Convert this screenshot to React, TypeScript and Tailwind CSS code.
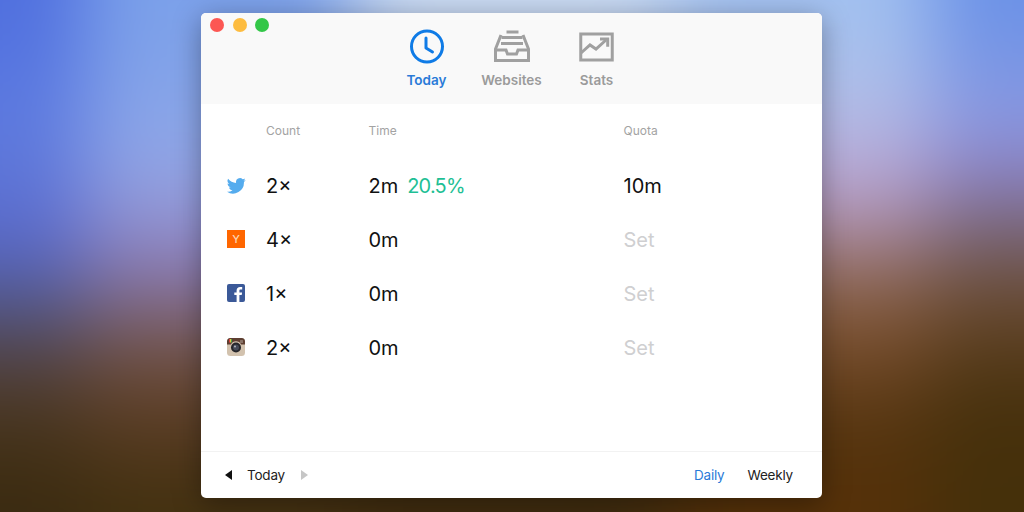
import React from "react";

const rows = [
  { icon: "twitter", count: "2×", time: "2m", pct: "20.5%", quota: "10m" },
  { icon: "yc", count: "4×", time: "0m", quota: "Set" },
  { icon: "facebook", count: "1×", time: "0m", quota: "Set" },
  { icon: "instagram", count: "2×", time: "0m", quota: "Set" },
];

const SiteIcon: React.FC<{ name: string }> = ({ name }) => {
  if (name === "twitter") {
    return (
      <svg width="19" height="19" viewBox="0 0 24 24" fill="#55acee">
        <path d="M23.6 4.9c-.9.4-1.8.7-2.8.8 1-.6 1.8-1.5 2.1-2.7-.9.6-2 1-3.1 1.2A4.9 4.9 0 0 0 11.5 8.700 13.900 13.900 0 0 1 1.400 3.600a4.900 4.900 0 0 0 1.500 6.500c-.8 0-1.500-.2-2.200-.6 0 2.400 1.700 4.400 3.900 4.900-.7.200-1.500.2-2.200.1.600 2 2.400 3.400 4.600 3.400A9.900 9.900 0 0 1 0 19.900 13.900 13.900 0 0 0 21.400 7.500c1-.7 1.800-1.600 2.200-2.600z" />
      </svg>
    );
  }
  if (name === "yc") {
    return (
      <div className="flex h-[18px] w-[18px] items-center justify-center bg-[#ff6600] text-[11px] font-medium leading-none text-[#fcd5b8]">
        Y
      </div>
    );
  }
  if (name === "facebook") {
    return (
      <svg width="18" height="18" viewBox="0 0 18 18">
        <rect width="18" height="18" rx="2" fill="#3b5998" />
        <path d="M12.400 18v-6.900h2.300l.4-2.700h-2.700V6.700c0-.8.200-1.300 1.300-1.300h1.500V3c-.3 0-1.100-.1-2.100-.1-2.100 0-3.500 1.300-3.500 3.600v1.900H7.300v2.700h2.300V18z" fill="#fff" />
      </svg>
    );
  }
  return (
    <svg width="18" height="18" viewBox="0 0 18 18">
      <rect width="18" height="18" rx="3.500" fill="#d2c2ae" />
      <path d="M0 6.500V3.500A3.500 3.500 0 0 1 3.500 0h11A3.500 3.500 0 0 1 18 3.500v3h-4a5.500 5.500 0 0 0-10 0z" fill="#5e3f32" />
      <rect x="2" y="1" width="1" height="3.500" fill="#d8403a" />
      <rect x="3" y="1" width="1" height="3.500" fill="#e8c040" />
      <rect x="4" y="1" width="1" height="3.500" fill="#50a050" />
      <rect x="13" y="2" width="3" height="3" rx=".5" fill="#8a7468" />
      <circle cx="9" cy="9.500" r="5" fill="#26262a" />
      <circle cx="9" cy="9.500" r="3" fill="#454a58" />
      <circle cx="8" cy="8.500" r=".9" fill="#c0c4cc" />
    </svg>
  );
};

export default function App() {
  return (
    <div className="relative h-[512px] w-[1024px] overflow-hidden bg-[#4a3a30] pl-[201px] pt-[13px] font-['Inter','Liberation_Sans',sans-serif]">
      {/* blurred wallpaper: vertical colour strips melted together */}
      <div className="absolute -inset-x-[120px] -inset-y-[120px] flex blur-[40px]">
        <div className="w-[205px] bg-[linear-gradient(180deg,#4f6fdf_120px,#5f7ce0_250px,#5a68c8_370px,#50598f_420px,#55454a_470px,#48351c_540px,#3a2a10_620px)]" />
        <div className="w-[265px] bg-[linear-gradient(180deg,#7aa0ea_120px,#8aa5e8_250px,#95a5e5_300px,#8a78b5_390px,#75584f_460px,#60402a_520px,#42300f_620px)]" />
        <div className="w-[320px] bg-[linear-gradient(180deg,#cadbf2_120px,#b0bfe8_280px,#8a6a70_430px,#5a3c18_530px,#3c2a0e_620px)]" />
        <div className="w-[260px] bg-[linear-gradient(180deg,#a0c0f0_120px,#b0bfe8_220px,#b8a8d8_290px,#b090b0_340px,#8a6650_400px,#7a4e2e_460px,#543510_540px,#553008_620px)]" />
        <div className="flex-1 bg-[linear-gradient(180deg,#6a92e8_120px,#8c9ae0_250px,#9080c8_290px,#7a6a80_340px,#6a4a30_420px,#46300c_520px,#45300a_620px)]" />
      </div>

      <div className="relative flex h-[485px] w-[621px] flex-col overflow-hidden rounded-[5px] bg-white shadow-[0_6px_28px_rgba(0,0,0,0.35)]">
        {/* title bar and tabs */}
        <div className="relative h-[91px] bg-[#f9f9f9]">
          <div className="absolute left-[9px] top-[5px] flex gap-[8.500px]">
            <div className="h-[14px] w-[14px] rounded-full bg-[#fc5753]" />
            <div className="h-[14px] w-[14px] rounded-full bg-[#fdbc40]" />
            <div className="h-[14px] w-[14px] rounded-full bg-[#33c748]" />
          </div>
          <div className="flex justify-center pt-[15px] text-[13.500px] font-semibold">
            <div className="flex w-[85px] flex-col items-center gap-[8px] text-[#2a7bd8]">
              <svg width="36" height="36" viewBox="0 0 36 36" fill="none" stroke="#0f7be6" strokeWidth="3">
                <circle cx="18" cy="18.500" r="15.500" />
                <path d="M17 10v10l6.500 4" strokeLinecap="round" strokeLinejoin="round" />
              </svg>
              <span className="leading-[17px]">Today</span>
            </div>
            <div className="flex w-[85px] flex-col items-center gap-[8px] text-[#9b9b9b]">
              <svg width="38" height="36" viewBox="0 0 38 36" fill="none" stroke="#a0a0a0" strokeWidth="3">
                <path d="M2.500 33V21L8 7M35.500 33V21L30 7" />
                <path d="M1 32.500h36" />
                <path d="M2 22h11l1.500 4h9l1.500-4h11" />
                <path d="M13.500 4h12M8.500 9.500h21M8 15.500h22" />
              </svg>
              <span className="leading-[17px]">Websites</span>
            </div>
            <div className="flex w-[85px] flex-col items-center gap-[8px] text-[#9b9b9b]">
              <svg width="36" height="36" viewBox="0 0 36 36" fill="none" stroke="#a0a0a0" strokeWidth="3">
                <rect x="1.750" y="6" width="31.500" height="26" />
                <path d="M2 25l9-8 6 4 10-9" />
                <path d="M21 11h7.700v7.700" />
              </svg>
              <span className="leading-[17px]">Stats</span>
            </div>
          </div>
        </div>

        {/* table */}
        <div className="flex-1 pl-[26px]">
          <div className="grid grid-cols-[39px_102.500px_255px_1fr] pt-[19px] text-[12px] leading-[15px] text-[#a3a3a3]">
            <span />
            <span>Count</span>
            <span>Time</span>
            <span>Quota</span>
          </div>
          <div className="mt-[20px]">
            {rows.map((row, i) => (
              <div
                key={i}
                className="grid h-[54px] grid-cols-[39px_102.500px_255px_1fr] items-center text-[20px] text-[#111]"
              >
                <SiteIcon name={row.icon} />
                <span className="pt-[2px]">{row.count}</span>
                <span className="flex gap-[9px] pt-[2px]">
                  {row.time}
                  {row.pct && <span className="tracking-[-0.8px] text-[#1fbf95]">{row.pct}</span>}
                </span>
                <span className={row.quota === "Set" ? "pt-[2px] text-[#cfcfd1]" : "pt-[2px]"}>{row.quota}</span>
              </div>
            ))}
          </div>
        </div>

        {/* footer */}
        <div className="flex h-[47px] items-center justify-between border-t border-[#f2f2f2] pl-[24px] pr-[29px] text-[13.500px] tracking-[-0.2px] text-[#222]">
          <div className="flex items-center">
            <svg width="7" height="10" viewBox="0 0 7 10" fill="#111">
              <path d="M7 0v10L0 5z" />
            </svg>
            <span className="ml-[15px]">Today</span>
            <svg className="ml-[16px]" width="7" height="10" viewBox="0 0 7 10" fill="#c6c6c6">
              <path d="M0 0v10l7-5z" />
            </svg>
          </div>
          <div className="flex gap-[23px]">
            <span className="text-[#2a7bd8]">Daily</span>
            <span>Weekly</span>
          </div>
        </div>
      </div>
    </div>
  );
}
